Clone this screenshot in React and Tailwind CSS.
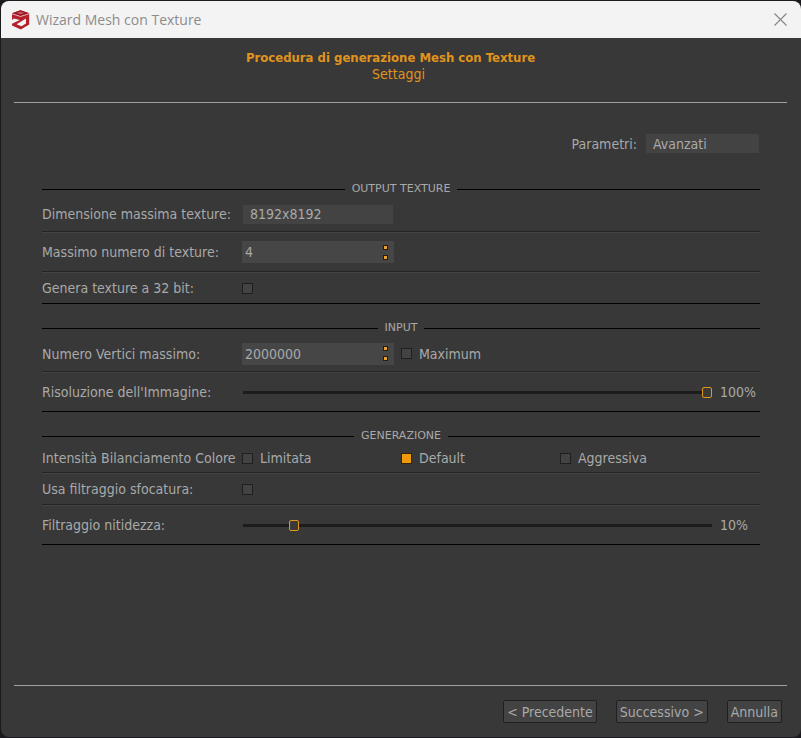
import { useState } from 'react';

function Logo() {
  return (
    <svg viewBox="0 0 19 20" className="w-[19px] h-5" aria-hidden="true">
      <path d="M9.5 0.3 18.2 3.2V14.6L9.8 19.4 1 15.4V12.8L2 11.8 1 10.4V3.2Z" fill="#b3202b" />
      <path d="M9.5 0.3 18.2 3.2 9.5 6 1 3.2Z" fill="#9c1a25" />
      <path d="M5.8 2.9 9.6 1.7 13.2 2.9 9.6 4.1Z" fill="#c8606a" />
      <path d="M1 3.8 9.5 6.5 18 3.8" fill="none" stroke="#f3f3f3" strokeWidth="0.7" />
      <path d="M0.5 10.6 2.8 8.6 8.8 10 0.5 14Z" fill="#f3f3f3" />
      <path d="M15 8.6V13.6L10.4 16.2 5.6 14.2Z" fill="#f3f3f3" />
    </svg>
  );
}

function Section({ title, children }) {
  return (
    <fieldset className="mb-4 border-b border-black">
      <legend className="flex w-full items-center gap-[7px] h-4 text-[11px] font-['DejaVu_Sans',sans-serif]">
        <span className="flex-1 h-px bg-black" />
        {title}
        <span className="flex-1 h-px bg-black" />
      </legend>
      {children}
    </fieldset>
  );
}

function Separator() {
  return <div className="h-0.5 bg-[#434343] border-t border-[#242424]" />;
}

function SpinBox({ id, value, onChange }) {
  return (
    <div className="flex items-center w-[152px] h-[22px] pl-[3px] pr-1.5 bg-[#464646]">
      <input
        id={id}
        type="text"
        inputMode="numeric"
        value={value}
        onChange={e => onChange(Number(e.target.value) || 0)}
        className="flex-1 min-w-0 outline-none"
      />
      <div className="flex flex-col gap-[5px]">
        <button
          type="button"
          aria-label="Aumenta"
          onClick={() => onChange(value + 1)}
          className="w-[5px] h-[5px] bg-[#e8a030] border border-[#2a1a08]"
        />
        <button
          type="button"
          aria-label="Diminuisci"
          onClick={() => onChange(value - 1)}
          className="w-[5px] h-[5px] bg-[#e8a030] border border-[#2a1a08]"
        />
      </div>
    </div>
  );
}

const boxClass = 'appearance-none shrink-0 w-[11px] h-[11px] bg-[#434343] border border-[#1f1f1f] checked:bg-[#ef9a0c] checked:border-[#3a2408]';
const buttonClass = 'h-[23px] px-[3px] rounded-xs border border-[#202020] bg-[#434343]';

function Slider({ id, value, onChange }) {
  return (
    <div className="flex flex-1 items-center pl-px">
      <input
        id={id}
        type="range"
        min="0"
        max="100"
        value={value}
        onChange={e => onChange(Number(e.target.value))}
        className="flex-1 min-w-0 h-[11px] appearance-none bg-transparent [&::-webkit-slider-runnable-track]:h-[3px] [&::-webkit-slider-runnable-track]:bg-[#1c1c1c] [&::-webkit-slider-thumb]:appearance-none [&::-webkit-slider-thumb]:w-2.5 [&::-webkit-slider-thumb]:h-[11px] [&::-webkit-slider-thumb]:-mt-1 [&::-webkit-slider-thumb]:rounded-xs [&::-webkit-slider-thumb]:border [&::-webkit-slider-thumb]:border-[#e0981e] [&::-webkit-slider-thumb]:bg-[#3d3a36]"
      />
      <output htmlFor={id} className="w-12 pl-2">{value}%</output>
    </div>
  );
}

const balances = ['Limitata', 'Default', 'Aggressiva'];

export default function App() {
  const [params, setParams] = useState('Avanzati');
  const [size, setSize] = useState('8192x8192');
  const [maxTextures, setMaxTextures] = useState(4);
  const [vertices, setVertices] = useState(2000000);
  const [resolution, setResolution] = useState(100);
  const [balance, setBalance] = useState('Default');
  const [sharpness, setSharpness] = useState(10);

  return (
    <div className="min-h-screen flex flex-col pl-px py-px bg-[#1b1a1e]">
      <div className="flex-1 flex flex-col rounded-lg overflow-hidden bg-[#383838] text-[#a9a9a9] text-sm leading-4 font-['DejaVu_Sans_Condensed','DejaVu_Sans',sans-serif]">
        {/* Title bar */}
        <header className="flex items-center h-[37px] pl-2.5 pr-3.5 bg-[#f3f3f3]">
          <Logo />
          <h1 className="flex-1 pl-1.5 text-[#8c8c8c] font-['Open_Sans',sans-serif]">Wizard Mesh con Texture</h1>
          <button type="button" aria-label="Chiudi" className="text-[#858585]">
            <svg viewBox="0 0 13 13" className="w-[13px] h-[13px]" fill="none" stroke="currentColor" strokeWidth="1.1">
              <path d="M0.5 0.5 12.5 12.5M12.5 0.5 0.5 12.5" />
            </svg>
          </button>
        </header>

        {/* Page heading */}
        <div className="ml-[13px] mr-3.5 pt-3 pb-5 border-b border-[#a0a0a0] text-center text-[#e0941c]">
          <h2 className="font-bold pr-5 text-[13px]">Procedura di generazione Mesh con Texture</h2>
          <p className="pr-1">Settaggi</p>
        </div>

        <main className="flex-1 px-[41px] pt-[31px]">
          <div className="flex items-center justify-end mb-7 pr-px">
            <label htmlFor="params" className="pr-[9px]">Parametri:</label>
            <select
              id="params"
              value={params}
              onChange={e => setParams(e.target.value)}
              className="appearance-none w-[113px] h-[19px] pl-[7px] bg-[#434343]"
            >
              <option>Base</option>
              <option>Avanzati</option>
            </select>
          </div>

          <Section title="OUTPUT TEXTURE">
            <div className="flex items-center h-[34px]">
              <label htmlFor="size" className="w-[201px]">Dimensione massima texture:</label>
              <select
                id="size"
                value={size}
                onChange={e => setSize(e.target.value)}
                className="appearance-none w-[150px] h-[19px] pl-[7px] bg-[#434343]"
              >
                <option>4096x4096</option>
                <option>8192x8192</option>
              </select>
            </div>
            <Separator />
            <div className="flex items-center h-[38px]">
              <label htmlFor="max-textures" className="w-[200px]">Massimo numero di texture:</label>
              <SpinBox id="max-textures" value={maxTextures} onChange={setMaxTextures} />
            </div>
            <Separator />
            <div className="flex items-center h-[30px]">
              <label htmlFor="bit32" className="w-[200px]">Genera texture a 32 bit:</label>
              <input id="bit32" type="checkbox" className={boxClass} />
            </div>
          </Section>

          <Section title="INPUT">
            <div className="flex items-center h-[35px]">
              <label htmlFor="vertices" className="w-[200px]">Numero Vertici massimo:</label>
              <SpinBox id="vertices" value={vertices} onChange={setVertices} />
              <label className="flex items-center gap-[7px] pl-[7px]">
                <input type="checkbox" className={boxClass} />
                Maximum
              </label>
            </div>
            <Separator />
            <div className="flex items-center h-[38px]">
              <label htmlFor="resolution" className="w-[200px]">Risoluzione dell'Immagine:</label>
              <Slider id="resolution" value={resolution} onChange={setResolution} />
            </div>
          </Section>

          <Section title="GENERAZIONE">
            <div role="radiogroup" aria-labelledby="balance-label" className="flex items-center h-[28px]">
              <span id="balance-label" className="w-[200px] whitespace-nowrap">Intensità Bilanciamento Colore</span>
              <div className="flex-1 flex">
                {balances.map(name => (
                  <label key={name} className="w-[159px] flex items-center gap-[7px]">
                    <input
                      type="radio"
                      name="balance"
                      checked={balance === name}
                      onChange={() => setBalance(name)}
                      className={boxClass}
                    />
                    {name}
                  </label>
                ))}
              </div>
            </div>
            <Separator />
            <div className="flex items-center h-[30px]">
              <label htmlFor="blur-filter" className="w-[200px]">Usa filtraggio sfocatura:</label>
              <input id="blur-filter" type="checkbox" className={boxClass} />
            </div>
            <Separator />
            <div className="flex items-center h-[38px]">
              <label htmlFor="sharpness" className="w-[200px]">Filtraggio nitidezza:</label>
              <Slider id="sharpness" value={sharpness} onChange={setSharpness} />
            </div>
          </Section>
        </main>

        {/* Wizard buttons */}
        <footer className="ml-[13px] mr-3.5 flex justify-end gap-[19px] pt-3.5 pb-3.5 pr-[5px] border-t border-[#a0a0a0]">
          <button type="button" className={buttonClass}>&lt; Precedente</button>
          <button type="button" className={buttonClass}>Successivo &gt;</button>
          <button type="button" className={buttonClass}>Annulla</button>
        </footer>
      </div>
    </div>
  );
}
